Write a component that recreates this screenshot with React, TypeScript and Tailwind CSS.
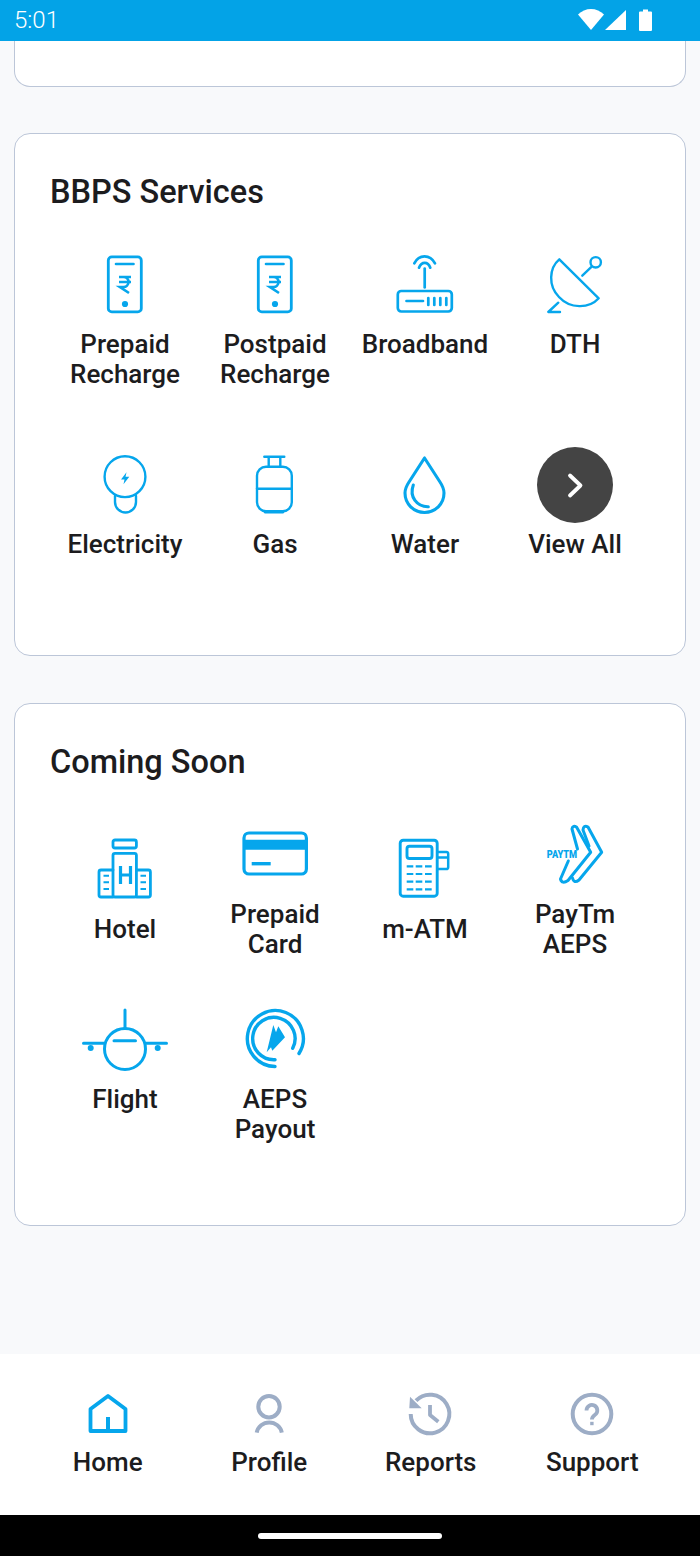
import type { ReactNode } from "react";

const B = "#06a6ec";

function Icon({ children }: { children: ReactNode }) {
  return (
    <svg viewBox="0 0 76 76" className="h-[76px] w-[76px] overflow-visible" fill="none" stroke={B} strokeWidth={2.7} strokeLinecap="round" strokeLinejoin="round">
      {children}
    </svg>
  );
}

const Phone = () => (
  <Icon>
    <g transform="translate(-0.5 0)">
      <rect x="21.8" y="10.9" width="33" height="55" rx="3.5" strokeWidth="2.8" />
      <path d="M29.5 18H47" strokeWidth="2.6" />
      <path d="M32.5 31H44.5M32.5 36H44.5M33.5 31H37a4.9 4.9 0 0 1 0 10h-3.5L42.5 47" strokeWidth="2.7" strokeLinecap="butt" strokeLinejoin="miter" />
      <circle cx="38.5" cy="58" r="3.1" fill={B} stroke="none" />
    </g>
  </Icon>
);

const Broadband = () => (
  <Icon>
    <rect x="10.8" y="45" width="54" height="20.5" rx="3.5" />
    <path d="M37.7 22.5V41.5" />
    <path d="M27.3 17.3C32 8 43 8 48 17.3" />
    <path d="M32 21.7C34.5 15.2 41 15.2 43.3 21.7" />
    <path d="M19.5 55H36" />
    <path d="M41.3 52V59M47.3 52V59M53.3 52V59M59.3 52V59" />
  </Icon>
);

const Dth = () => (
  <Icon>
    <path d="M22.3 13.3L61.7 52.3C52 63 33 63 22 51C11 40 12 22 22.3 13.3Z" strokeWidth="2.4" />
    <circle cx="58.7" cy="16.3" r="5.2" strokeWidth="2.4" />
    <path d="M45.3 29.7L54.7 20.7" strokeWidth="2.4" />
    <path d="M21.3 56.7L11.3 66H23" strokeWidth="2.4" />
  </Icon>
);

const Electricity = () => (
  <Icon>
    <circle cx="38" cy="29.7" r="20.4" strokeWidth="2.4" />
    <path d="M28 49V55a10.5 10.5 0 0 0 21 0V49" strokeWidth="2.4" />
    <path d="M39.5 25.3L34 32.5H37.5L36.5 37.3L42.3 29.8H38.5Z" fill={B} stroke="none" />
  </Icon>
);

const Gas = () => (
  <Icon>
    <rect x="20" y="19.7" width="34.8" height="44.6" rx="9" strokeWidth="2.4" />
    <path d="M20 41.7H54.8" strokeWidth="2.4" />
    <path d="M27.3 9.7H47.3M31.7 9.7V19.7M43.3 9.7V19.7" strokeWidth="2.4" />
    <path d="M28 65H46" strokeWidth="2.8" />
  </Icon>
);

const Water = () => (
  <Icon>
    <path d="M37.5 11L22 35Q18 41 18 46A19.5 19.5 0 0 0 57 46Q57 41 53 35Z" strokeWidth="3.1" />
    <path d="M26.3 38C22 50 30 60 41.3 59.7" strokeWidth="3.1" />
  </Icon>
);

const ViewAll = () => (
  <div className="flex h-[76px] w-[76px] items-center justify-center rounded-full bg-[#444444]">
    <svg viewBox="0 0 76 76" className="h-[76px] w-[76px]" fill="none" stroke="#fff" strokeWidth="3.8" strokeLinecap="round" strokeLinejoin="round">
      <path d="M33 28.5L43.5 38.5L33 48.5" />
    </svg>
  </div>
);

const Hotel = () => (
  <Icon>
    <rect x="26" y="9" width="23.4" height="8" rx="2" strokeWidth="2.8" />
    <rect x="26" y="22.3" width="23.4" height="43.7" rx="2" strokeWidth="2.8" />
    <path d="M26 39H14a2 2 0 0 0-2 2V64a2 2 0 0 0 2 2H26M49.4 39H61.4a2 2 0 0 1 2 2V64a2 2 0 0 1-2 2H49.4" strokeWidth="2.8" />
    <path d="M33.5 35V53M43.5 35V53M33.5 44H43.5" strokeWidth="3.2" strokeLinecap="butt" />
    <path d="M16.5 44.7H22M16.5 51.3H22M16.5 58H22M53.5 44.7H59M53.5 51.3H59M53.5 58H59" strokeWidth="2" strokeLinecap="butt" />
  </Icon>
);

const Card = () => (
  <Icon>
    <rect x="7" y="17" width="62.4" height="41" rx="5" strokeWidth="3.2" />
    <path d="M7 28.7H69.4" strokeWidth="10" strokeLinecap="butt" />
    <path d="M14.7 47.7H33.7" strokeWidth="3.4" strokeLinecap="butt" />
  </Icon>
);

const Atm = () => (
  <Icon>
    <rect x="13.2" y="9.2" width="37" height="56" rx="3" strokeWidth="2.9" />
    <rect x="20" y="15.2" width="25" height="12.3" rx="2.5" strokeWidth="2.9" />
    <path d="M51 21H59.5a1.7 1.7 0 0 1 1.7 1.7V36.3a1.7 1.7 0 0 1-1.7 1.7H51M51 26.5H61" strokeWidth="2.5" />
    <path d="M19.7 35.3H26.3M28.7 35.3H35.3M38 35.3H44.7M19.7 43H26.3M28.7 43H35.3M38 43H44.7M19.7 50.7H26.3M28.7 50.7H35.3M38 50.7H44.7M19.7 58.3H26.3M28.7 58.3H35.3M38 58.3H44.7" strokeWidth="2.2" strokeLinecap="butt" />
  </Icon>
);

const Paytm = () => (
  <Icon>
    <path d="M40.5 33L35 13Q35.5 9 39.5 11L53.7 36.3L31 64.5Q25 68.5 23.5 63L31.3 45" strokeWidth="3" />
    <path d="M52 30L46 14Q46.5 8.5 51 11L64.7 36.3L42 64Q37 68 35.5 62" strokeWidth="3" />
    <text x="9.7" y="42" fontFamily="Roboto, sans-serif" fontSize="11" fontWeight="900" textLength="30.5" lengthAdjust="spacingAndGlyphs" fill={B} stroke="none">PAYTM</text>
  </Icon>
);

const Flight = () => (
  <Icon>
    <circle cx="38" cy="48" r="20.5" strokeWidth="3" />
    <path d="M38 9V27M-3.5 42.3H17M59 42.3H79.5M27 39.7H48.5" strokeWidth="3" />
    <circle cx="3.7" cy="47" r="3" fill={B} stroke="none" />
    <circle cx="70.7" cy="47" r="3" fill={B} stroke="none" />
  </Icon>
);

const Aeps = () => (
  <Icon>
    <path d="M38 65.5A28 28 0 1 1 62 52.5" strokeWidth="3.4" />
    <path d="M38 58.7A21.2 21.2 0 1 1 55.7 47.3" strokeWidth="3.4" />
    <path d="M29.7 51.3L36.3 24L39 31.3L41.3 25.3L48 36.3L35.3 49.7L34 46.3Z" fill={B} stroke="none" />
  </Icon>
);

type Item = { label: string[]; icon: ReactNode; center?: boolean; tight?: boolean };

function Tile({ label, icon, center, tight }: Item) {
  return (
    <div className={center ? "flex flex-col items-center self-center" : "flex flex-col items-center"}>
      {icon}
      <div className={tight ? "mt-[6px] text-center text-[26px] font-medium leading-[30px] text-[#1c1c1e]" : "mt-[7px] text-center text-[26px] font-medium leading-[30px] text-[#1c1c1e]"}>
        {label.map((l) => (
          <div key={l} className="whitespace-nowrap">{l}</div>
        ))}
      </div>
    </div>
  );
}

function Section({ title, items, gap, bottom }: { title: string; items: Item[]; gap: string; bottom: string }) {
  return (
    <section className={`rounded-[16px] border border-[#bcc6d8] bg-white px-[35px] pt-[40px] ${bottom}`}>
      <h2 className="mb-[36px] text-[32.5px] font-medium leading-[36px] text-[#1c1c1e]">{title}</h2>
      <div className={`grid grid-cols-4 ${gap}`}>
        {items.map((it) => (
          <Tile key={it.label.join(" ")} {...it} />
        ))}
      </div>
    </section>
  );
}

const G = "#9dadc6";

function NavItem({ label, children }: { label: string; children: ReactNode }) {
  return (
    <div className="flex flex-col items-center">
      <svg viewBox="0 0 48 48" className="h-[48px] w-[48px]" fill="none" strokeLinejoin="round">
        {children}
      </svg>
      <div className="mt-[9px] text-[26px] font-medium leading-[30px] text-[#1c1c1e]">{label}</div>
    </div>
  );
}

export default function App() {
  return (
    <div className="flex h-[1556px] w-[700px] flex-col overflow-hidden bg-[#f8f9fb] font-['Roboto',sans-serif]">
      <header className="flex h-[41px] shrink-0 items-center justify-between bg-[#03a3e7] pl-[14px] pr-[47px] text-white">
        <span className="text-[24px] font-light leading-[43px]">5:01</span>
        <svg viewBox="0 0 75 41" className="h-[41px] w-[75px]" fill="#fff">
          <path d="M0 14.5C7 7 19 7 26 14.5L13 30Z" />
          <path d="M27 30L48 10V30Z" />
          <path d="M65 9.5H70V11.5H73a1 1 0 0 1 1 1V30a1 1 0 0 1-1 1H62a1 1 0 0 1-1-1V12.5a1 1 0 0 1 1-1H65Z" />
        </svg>
      </header>

      <main className="flex-1 overflow-hidden px-[14px]">
        <div className="h-[46px] rounded-b-[16px] border border-t-0 border-[#bcc6d8] bg-white" />
        <div className="mt-[46px]">
          <Section
            title="BBPS Services"
            gap="gap-y-[58px]"
            bottom="pb-[96px]"
            items={[
              { label: ["Prepaid", "Recharge"], icon: <Phone /> },
              { label: ["Postpaid", "Recharge"], icon: <Phone /> },
              { label: ["Broadband"], icon: <Broadband /> },
              { label: ["DTH"], icon: <Dth /> },
              { label: ["Electricity"], icon: <Electricity />, tight: true },
              { label: ["Gas"], icon: <Gas />, tight: true },
              { label: ["Water"], icon: <Water />, tight: true },
              { label: ["View All"], icon: <ViewAll />, tight: true },
            ]}
          />
        </div>
        <div className="mt-[47px]">
          <Section
            title="Coming Soon"
            gap="gap-y-[42px]"
            bottom="pb-[81px]"
            items={[
              { label: ["Hotel"], icon: <Hotel />, center: true },
              { label: ["Prepaid", "Card"], icon: <Card /> },
              { label: ["m-ATM"], icon: <Atm />, center: true },
              { label: ["PayTm", "AEPS"], icon: <Paytm /> },
              { label: ["Flight"], icon: <Flight /> },
              { label: ["AEPS", "Payout"], icon: <Aeps /> },
            ]}
          />
        </div>
      </main>

      <nav className="grid h-[161px] shrink-0 grid-cols-4 bg-white px-[27px] pt-[36px]">
        <NavItem label="Home">
          <path d="M6.5 41V19L24 6L41.5 19V41Z" stroke={B} strokeWidth="3.8" />
          <path d="M24 27V41" stroke={B} strokeWidth="4" />
        </NavItem>
        <NavItem label="Profile">
          <circle cx="24" cy="16.7" r="10.7" stroke={G} strokeWidth="4" />
          <path d="M11.7 42.7A12.8 12.8 0 0 1 36.8 42.7" stroke={G} strokeWidth="4" />
        </NavItem>
        <NavItem label="Reports">
          <path d="M9 10.7A19.3 19.3 0 1 1 3.7 24" stroke={G} strokeWidth="4" />
          <path d="M2.3 18.3L3 6.7L14.7 18.3Z" fill={G} />
          <path d="M23 15V25L31.3 31.7" stroke={G} strokeWidth="3.8" />
        </NavItem>
        <NavItem label="Support">
          <circle cx="24" cy="24" r="19.3" stroke={G} strokeWidth="4" />
          <path d="M18.5 20.5a5.4 5.4 0 1 1 8.5 4.3c-2 1.5-3.1 2.4-3.1 4.8" stroke={G} strokeWidth="3.8" />
          <path d="M22.2 31.8H25.6V35.2H22.2Z" fill={G} />
        </NavItem>
      </nav>

      <footer className="flex h-[41px] shrink-0 items-start justify-center bg-black pt-[18px]">
        <div className="h-[6px] w-[184px] rounded-full bg-white" />
      </footer>
    </div>
  );
}
